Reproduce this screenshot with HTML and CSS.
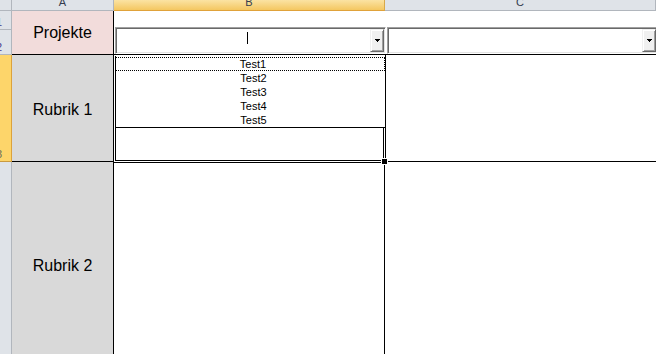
FILE: index.html
```html
<!DOCTYPE html>
<html lang="de">
<head>
    <meta charset="UTF-8">
    <meta name="viewport" content="width=device-width, initial-scale=1.0">
    <title>Projekte</title>
    <link rel="stylesheet" href="styles.css">
</head>
<body>
    <div class="sheet">
        <div class="corner"></div>
        <div class="col-head"><span>A</span></div>
        <div class="col-head col-head-active"><span>B</span></div>
        <div class="col-head"><span>C</span></div>

        <div class="row-head"><span>1</span></div>
        <div class="cell cell-title cell-merged">Projekte</div>
        <div class="cell cell-wide"></div>

        <div class="row-head"><span>2</span></div>
        <div class="cell cell-line-bottom"></div>
        <div class="cell cell-line-bottom"></div>

        <div class="row-head row-head-active"><span>3</span></div>
        <div class="cell cell-label cell-line-right cell-line-bottom">Rubrik 1</div>
        <div class="cell cell-line-right cell-line-bottom"></div>
        <div class="cell cell-line-bottom"></div>

        <div class="row-head"><span>4</span></div>
        <div class="cell cell-label cell-line-right">Rubrik 2</div>
        <div class="cell cell-line-right"></div>
        <div class="cell"></div>

        <!-- active cell B3 -->
        <div class="selection"></div>

        <!-- form controls lying over the cells -->
        <div class="combo combo-b">
            <div class="combo-field"><span class="caret"></span></div>
            <div class="combo-button">
                <svg width="5" height="3" viewBox="0 0 5 3" shape-rendering="crispEdges">
                    <rect x="0" y="0" width="5" height="1" fill="#000"/>
                    <rect x="1" y="1" width="3" height="1" fill="#000"/>
                    <rect x="2" y="2" width="1" height="1" fill="#000"/>
                </svg>
            </div>
        </div>

        <div class="combo combo-c">
            <div class="combo-field"></div>
            <div class="combo-button">
                <svg width="5" height="3" viewBox="0 0 5 3" shape-rendering="crispEdges">
                    <rect x="0" y="0" width="5" height="1" fill="#000"/>
                    <rect x="1" y="1" width="3" height="1" fill="#000"/>
                    <rect x="2" y="2" width="1" height="1" fill="#000"/>
                </svg>
            </div>
        </div>

        <div class="listbox">
            <div class="list-item list-item-focus">Test1</div>
            <div class="list-item">Test2</div>
            <div class="list-item">Test3</div>
            <div class="list-item">Test4</div>
            <div class="list-item">Test5</div>
        </div>

        <div class="fill-handle"></div>
    </div>
</body>
</html>
```

FILE: styles.css
```css
* {
    margin: 0;
    padding: 0;
    box-sizing: border-box;
    font-family: 'Liberation Sans', Arial, sans-serif;
}

body {
    background-color: #ffffff;
    color: #000000;
    overflow: hidden;
}

.sheet {
    position: relative;
    display: grid;
    grid-template-columns: 12px 102px 271px 1fr;
    grid-template-rows: 11px 19px 25px 107px 204px;
    width: 656px;
}

/* headers */

.corner,
.col-head,
.row-head {
    background-color: #dfe3e8;
    border-right: 1px solid #b1b6bd;
    border-bottom: 1px solid #b1b6bd;
    overflow: hidden;
    font-size: 11px;
    line-height: 11px;
    color: #333c4e;
}

.col-head {
    display: flex;
    justify-content: center;
}

.col-head span {
    display: block;
    margin-top: -3px;
}

.col-head-active {
    background: linear-gradient(#fbe3a3, #f4c761);
    border-right-color: #d8a848;
    border-bottom-color: #e0a23a;
}

.row-head {
    display: flex;
    align-items: flex-end;
    color: #4a3a8c;
}

.row-head span {
    display: block;
    margin-left: -4px;
    margin-bottom: 1px;
}

.row-head-active {
    background-color: #fdd56a;
    border-right-color: #dca23b;
    border-bottom-color: #c99a40;
    color: #6b6b5b;
}

/* cells */

.cell {
    background-color: #ffffff;
}

.cell-merged {
    grid-row: span 2;
}

.cell-wide {
    grid-column: span 2;
}

.cell-title {
    background-color: #f2dcdb;
    border-right: 1px solid #000;
    border-bottom: 1px solid #000;
    padding-top: 1px;
}

.cell-title,
.cell-label {
    display: flex;
    align-items: center;
    justify-content: center;
    font-size: 16px;
}

.cell-label {
    background-color: #d9d9d9;
    padding-top: 3px;
}

.cell-line-right {
    border-right: 1px solid #000;
}

.cell-line-bottom {
    border-bottom: 1px solid #000;
}

.selection {
    position: absolute;
    left: 113px;
    top: 54px;
    width: 273px;
    height: 109px;
    border: 1px solid #000;
    box-shadow: inset 0 0 0 1px #fff, inset 0 0 0 2px #000;
}

.fill-handle {
    position: absolute;
    left: 381px;
    top: 158px;
    width: 7px;
    height: 7px;
    background-color: #000;
    border: 1px solid #fff;
}

/* combo boxes */

.combo {
    position: absolute;
    top: 27px;
    width: 271px;
    height: 27px;
    display: flex;
    padding: 1px;
    background-color: #fff;
    border: 1px solid;
    border-color: #a0a0a0 #ffffff #ffffff #a0a0a0;
    box-shadow: inset 1px 1px 0 #696969, inset -1px -1px 0 #e3e3e3;
}

.combo-b {
    left: 115px;
}

.combo-c {
    left: 387px;
}

.combo-field {
    flex: 1;
    padding: 3px 0 0 130px;
}

.caret {
    display: block;
    width: 1px;
    height: 12px;
    background-color: #000;
}

.combo-button {
    width: 14px;
    display: flex;
    align-items: center;
    justify-content: center;
    background-color: #f0f0f0;
    border: 1px solid;
    border-color: #f0f0f0 #696969 #696969 #f0f0f0;
    box-shadow: inset 1px 1px 0 #fff, inset -1px -1px 0 #a0a0a0;
}

.combo-button svg {
    display: block;
}

/* list box */

.listbox {
    position: absolute;
    left: 115px;
    top: 56px;
    width: 271px;
    height: 72px;
    padding-top: 1px;
    background-color: #fff;
    border-left: 1px solid #000;
    border-right: 1px solid #000;
    border-bottom: 1px solid #000;
}

.list-item {
    height: 14px;
    padding-left: 6px;
    font-size: 11px;
    line-height: 14px;
    text-align: center;
    color: #000;
}

.list-item-focus {
    margin-left: -1px;
    width: calc(100% + 1px);
    border: 1px dotted #000;
    line-height: 12px;
}
```
